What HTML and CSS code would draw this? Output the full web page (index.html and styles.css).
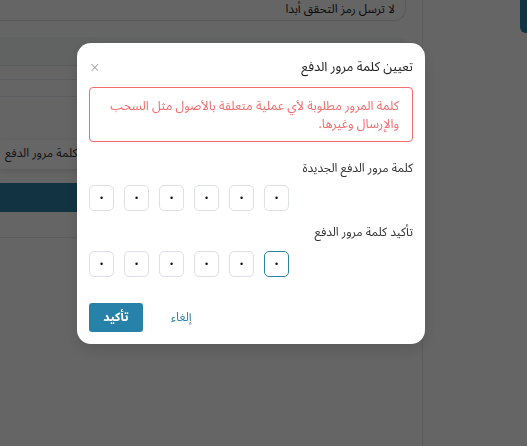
FILE: index.html
```html
<!DOCTYPE html>
<html lang="ar" dir="rtl">
<head>
<meta charset="utf-8">
<link rel="stylesheet" href="styles.css">
</head>
<body>

<div class="page">
  <aside class="side">
    <div class="side-tab"></div>
  </aside>
  <main class="main">
    <div class="top-row">
      <span class="pill">لا ترسل رمز التحقق أبدا</span>
    </div>
    <div class="band"></div>
    <div class="lines">
      <div class="line"></div>
      <div class="line"></div>
    </div>
    <div class="menu-item">كلمة مرور الدفع</div>
    <div class="primary-bar"></div>
    <div class="line low"></div>
  </main>
</div>

<div class="overlay">
  <div class="modal">
    <div class="modal-header">
      <span class="modal-title">تعيين كلمة مرور الدفع</span>
      <span class="close">&#215;</span>
    </div>
    <div class="alert">كلمة المرور مطلوبة لأي عملية متعلقة بالأصول مثل السحب والإرسال وغيرها.</div>

    <div class="label">كلمة مرور الدفع الجديدة</div>
    <div class="code">
      <span class="digit">&#8226;</span>
      <span class="digit">&#8226;</span>
      <span class="digit">&#8226;</span>
      <span class="digit">&#8226;</span>
      <span class="digit">&#8226;</span>
      <span class="digit">&#8226;</span>
    </div>

    <div class="label second">تأكيد كلمة مرور الدفع</div>
    <div class="code">
      <span class="digit">&#8226;</span>
      <span class="digit">&#8226;</span>
      <span class="digit">&#8226;</span>
      <span class="digit">&#8226;</span>
      <span class="digit">&#8226;</span>
      <span class="digit focus">&#8226;</span>
    </div>

    <div class="modal-footer">
      <button class="btn-text">إلغاء</button>
      <button class="btn-primary">تأكيد</button>
    </div>
  </div>
</div>

</body>
</html>
```

FILE: styles.css
```css
* {
  box-sizing: border-box;
}

body {
  margin: 0;
  height: 100vh;
  overflow: hidden;
  background-color: #fbfcfb;
  font-family: "Noto Sans Arabic", "DejaVu Sans", sans-serif;
  color: #303133;
}

.page {
  display: flex;
  height: 100%;
}

/* page under the dialog */
.side {
  width: 105px;
  border-left: 1px solid #e4e7ed;
  display: flex;
}

.side-tab {
  width: 7px;
  height: 33px;
  background-color: #2d80a5;
  border-bottom-left-radius: 6px;
}

.main {
  flex: 1;
}

.top-row {
  height: 21px;
  margin-right: 16px;
  border-bottom: 1px solid #dcdfe6;
  border-right: 1px solid #dcdfe6;
  border-bottom-right-radius: 12px;
  padding: 2px 10px 0 0;
}

.pill {
  display: block;
  font-size: 12px;
  line-height: 15px;
  color: #222;
}

.band {
  margin: 16px 17px 0 0;
  height: 28px;
  background-color: #f3f4f4;
  border-top-right-radius: 8px;
}

.lines {
  border-top: 1px solid #e4e7ed;
}

.line {
  height: 14px;
  border-bottom: 1px solid #e4e7ed;
}

.line + .line {
  height: 17px;
}

.menu-item {
  margin-top: 43px;
  height: 29px;
  width: 90px;
  margin-right: auto;
  background-color: #ffffff;
  box-shadow: 0 2px 6px rgba(0, 0, 0, 0.12);
  font-size: 12px;
  line-height: 28px;
  padding-left: 5px;
  direction: ltr;
  text-align: left;
  white-space: nowrap;
  overflow: hidden;
}

.primary-bar {
  margin-top: 14px;
  height: 29px;
  background-color: #2d80a5;
}

.line.low {
  height: 26px;
}

/* dialog */
.overlay {
  position: fixed;
  top: 0;
  left: 0;
  right: 0;
  bottom: 0;
  background-color: rgba(0, 0, 0, 0.6);
  direction: ltr;
  padding: 43px 0 0 77px;
}

.modal {
  direction: rtl;
  width: 348px;
  height: 301px;
  background-color: #fff;
  border-radius: 14px;
  box-shadow: 0 6px 16px rgba(0, 0, 0, 0.12);
  padding: 14px 12px 0 12px;
}

.modal-header {
  display: flex;
  justify-content: space-between;
  align-items: center;
  height: 20px;
}

.modal-title {
  font-size: 13px;
  color: #222;
}

.close {
  font-family: "DejaVu Sans", sans-serif;
  font-weight: 200;
  font-size: 14px;
  line-height: 14px;
  color: #909399;
}

.alert {
  margin-top: 10px;
  height: 55px;
  border: 1px solid #f56c6c;
  border-radius: 4px;
  padding: 9px 13px 0 13px;
  font-size: 12.5px;
  line-height: 18px;
  color: #f56c6c;
}

.label {
  margin-top: 17px;
  font-size: 12px;
  line-height: 20px;
  color: #303133;
}

.label.second {
  margin-top: 12px;
}

.code {
  direction: ltr;
  display: flex;
  gap: 10px;
  margin-top: 6px;
}

.label.second + .code {
  margin-top: 8px;
}

.digit {
  width: 25px;
  height: 26px;
  border: 1px solid #dcdfe6;
  border-radius: 5px;
  display: flex;
  align-items: center;
  justify-content: center;
  font-family: "Liberation Sans", sans-serif;
  font-size: 9px;
  color: #111;
}

.digit.focus {
  border-color: #2d80a5;
}

.modal-footer {
  margin-top: 26px;
  display: flex;
  justify-content: flex-end;
  align-items: center;
  gap: 17px;
}

button {
  font-family: inherit;
  cursor: pointer;
}

.btn-text {
  border: none;
  background: none;
  color: #2d80a5;
  font-size: 12px;
  padding: 0 11px;
  height: 29px;
}

.btn-primary {
  border: none;
  border-radius: 3px;
  background-color: #2782a9;
  color: #fff;
  font-size: 12px;
  font-weight: bold;
  width: 54px;
  height: 29px;
}
```
